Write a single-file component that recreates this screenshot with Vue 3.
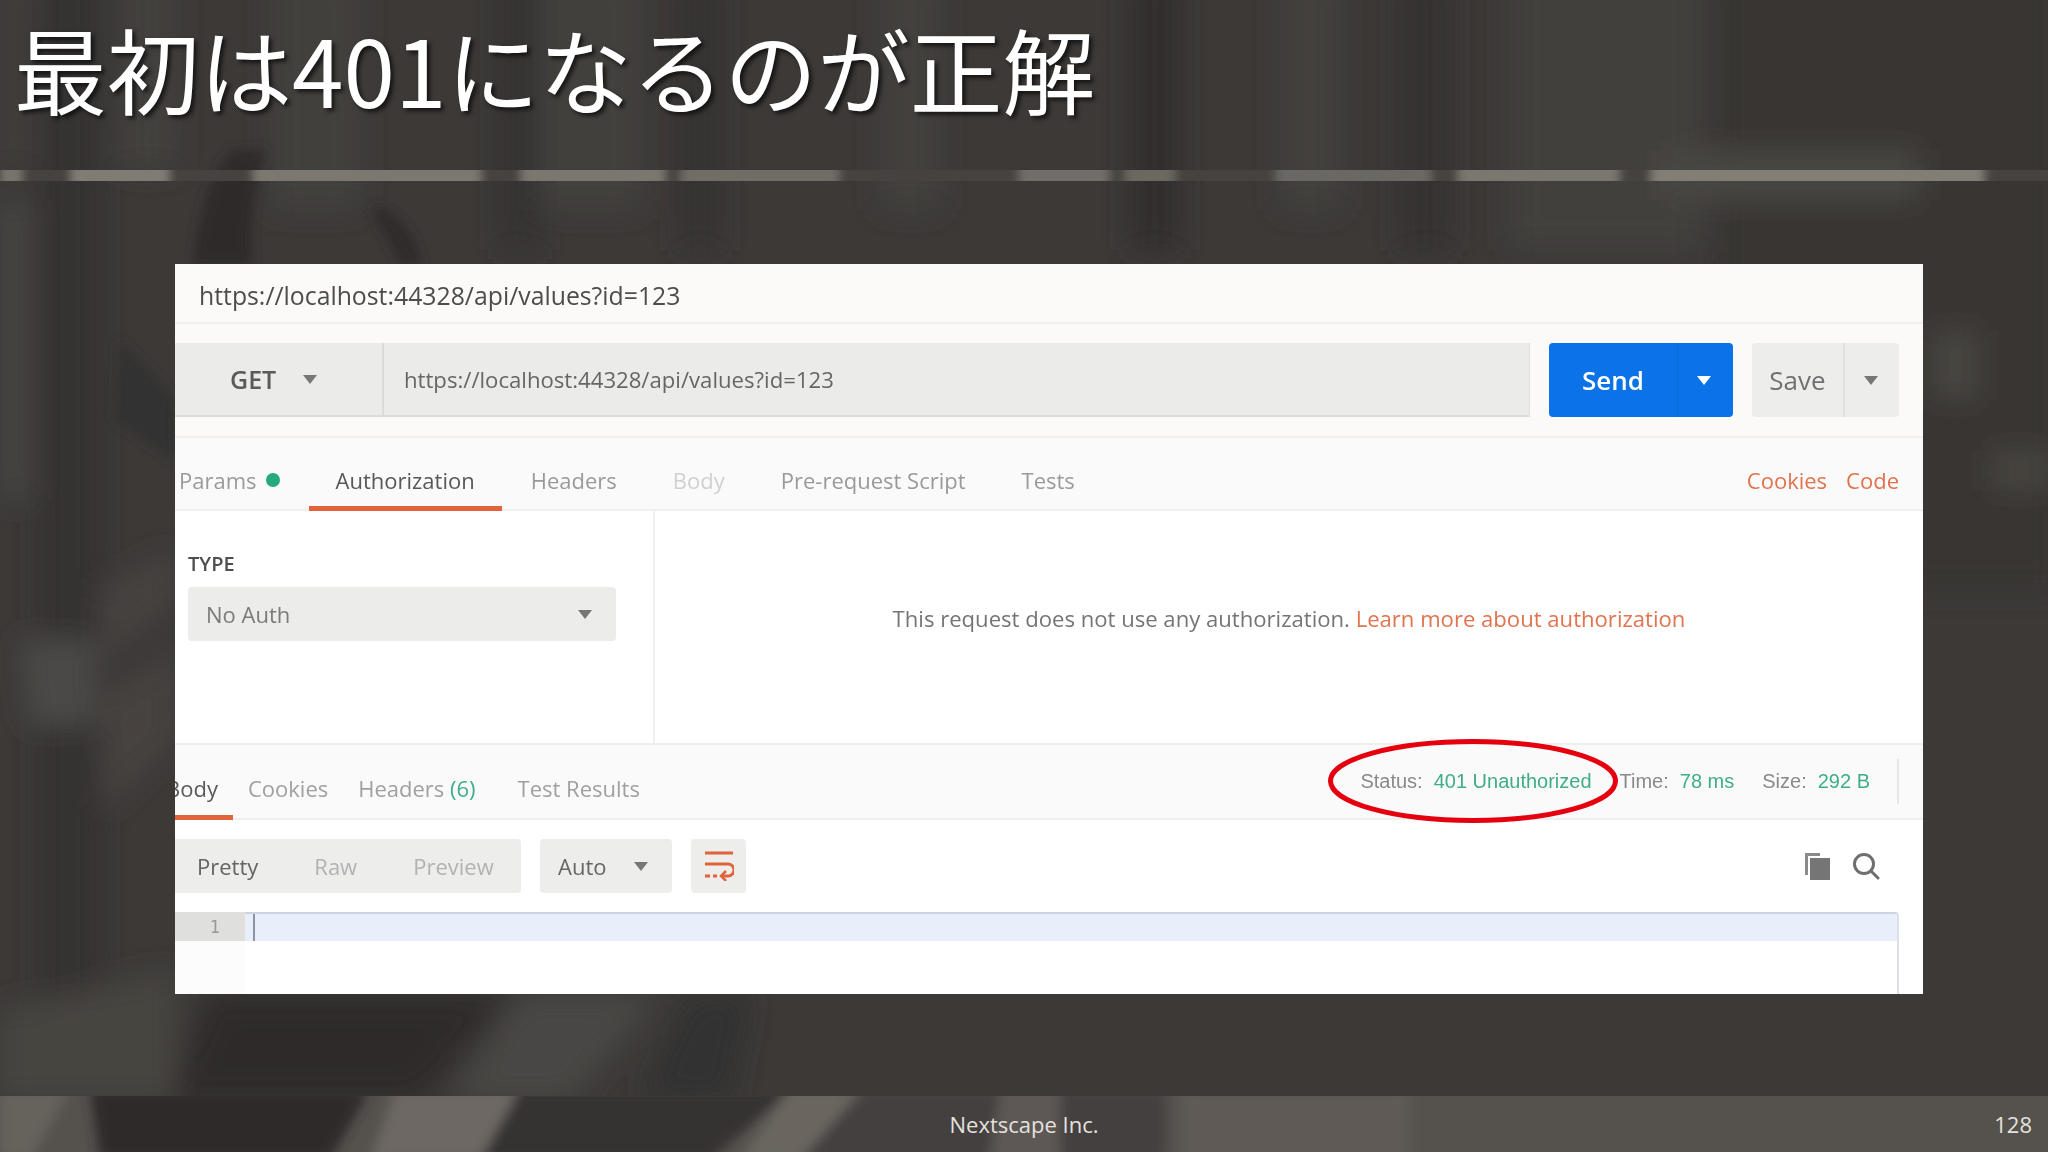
<template>
  <div class="slide">
    <!-- blurred photo behind the slide -->
    <svg class="backdrop" viewBox="0 0 2048 1152" width="2048" height="1152">
      <defs>
        <filter id="soft"><feGaussianBlur stdDeviation="14" /></filter>
        <filter id="softer"><feGaussianBlur stdDeviation="6" /></filter>
        <filter id="sideways"><feGaussianBlur stdDeviation="5 0" /></filter>
        <clipPath id="stripClip"><rect x="0" y="170" width="2048" height="11" /></clipPath>
        <clipPath id="footClip"><rect x="0" y="1096" width="2048" height="56" /></clipPath>
      </defs>
      <rect width="2048" height="1152" fill="#3c3937" />
      <g filter="url(#soft)">
        <rect v-for="b in bands" :key="b.x" :x="b.x" y="-30" :width="b.w" :height="b.h" :fill="b.c" />
        <path d="M1720 -30h340v620h-340z" fill="#383433" />
        <path d="M1660 150h260v50h-260z" fill="#4a4743" />
        <path d="M20 640h75v85H30z" fill="#4b4846" />
        <path d="M100 590l75-40v50l-75 60zM100 700l75-50v90l-70 70z" fill="#464341" />
        <path d="M0 1010l175-40v130H0z" fill="#474441" />
        <path d="M0 200h28v300H0z" fill="#474442" />
        <path d="M210 995h300l-90 105H170z" fill="#2f2c2b" />
        <path d="M520 995h140l-90 105H450z" fill="#4a4744" />
        <path d="M690 995h60l-20 105h-90z" fill="#333030" />
        <path d="M1930 330h50v70h-50zM1990 450h60v40h-60z" fill="#474441" />
      </g>
      <g filter="url(#softer)">
        <path d="M235 150c-25 20-35 60-42 115h60c-5-40 0-70 14-115z" fill="#2f2c2b" />
        <path d="M372 205c20 5 40 20 50 60h-20c-10-20-25-40-30-60z" fill="#2d2a29" />
        <path d="M120 340l55 60v60l-60-40z" fill="#333030" />
      </g>
      <g clip-path="url(#stripClip)">
        <rect x="0" y="170" width="2048" height="11" fill="#45423f" />
        <g filter="url(#sideways)">
          <rect v-for="s in stripSegments" :key="s[0]" :x="s[0]" y="160" :width="s[1]" height="30" :fill="s[2]" />
        </g>
      </g>
      <g clip-path="url(#footClip)">
        <rect x="0" y="1096" width="2048" height="56" fill="#55514d" />
        <g filter="url(#softer)">
          <path d="M0 1090h70l-40 70H0z" fill="#66625b" />
          <path d="M90 1090h280l-40 70H100z" fill="#2f2c2b" />
          <path d="M395 1090h120l-10 70H370z" fill="#6d6863" />
          <path d="M520 1090h270l-80 70H480z" fill="#363332" />
          <path d="M790 1090h70l-60 70h-60z" fill="#6a665f" />
          <path d="M865 1090h300v70H800z" fill="#45413f" />
          <path d="M1000 1090h60v70h-70z" fill="#5d5954" />
          <path d="M1180 1090h230v70h-230z" fill="#5e5a54" />
        </g>
      </g>
    </svg>

    <header class="head">
      <h1 class="title">最初は401になるのが正解</h1>
    </header>

    <main class="body">
      <section class="card">
        <div class="req-title">{{ url }}</div>

        <div class="req-bar">
          <div class="address">
            <div class="method">GET<i class="caret dark"></i></div>
            <div class="url">{{ url }}</div>
          </div>
          <div class="send">
            <span class="send-label">Send</span>
            <span class="send-more"><i class="caret white"></i></span>
          </div>
          <div class="save">
            <span class="save-label">Save</span>
            <span class="save-more"><i class="caret dark"></i></span>
          </div>
        </div>

        <div class="req-tabs">
          <span v-for="t in reqTabs" :key="t.name" class="tab" :class="[t.cls, { active: t.active }]">
            {{ t.name }}<i v-if="t.dot" class="dot"></i>
          </span>
          <span class="links"><a>Cookies</a><a>Code</a></span>
        </div>

        <div class="auth">
          <div class="auth-left">
            <div class="type-label">TYPE</div>
            <div class="select">No Auth<i class="caret dark"></i></div>
          </div>
          <div class="auth-right">
            This request does not use any authorization.
            <a>Learn more about authorization</a>
          </div>
        </div>

        <div class="res-tabs">
          <span class="res-tab first">Body</span>
          <span class="res-tab">Cookies</span>
          <span class="res-tab">Headers <em>(6)</em></span>
          <span class="res-tab">Test Results</span>
          <div class="stats">
            <span v-for="s in stats" :key="s.label" class="stat">{{ s.label }}<b>{{ s.value }}</b></span>
          </div>
          <svg class="ring" width="296" height="90" viewBox="0 0 296 90">
            <ellipse cx="148" cy="45" rx="142.500" ry="39.500" fill="none" stroke="#e5000f" stroke-width="5" />
          </svg>
        </div>

        <div class="tools">
          <div class="views">
            <span class="on">Pretty</span><span>Raw</span><span>Preview</span>
          </div>
          <div class="lang">Auto<i class="caret dark"></i></div>
          <div class="wrap">
            <svg width="30" height="30" viewBox="0 0 30 30" fill="none" stroke="#e0633a" stroke-width="3">
              <path d="M1 2h28M1 13h23a5.500 5.500 0 0 1 0 12h-6" />
              <path d="M22 20l-5 5 5 5" stroke-width="2.500" />
              <path d="M1 25h5M9 25h4" />
            </svg>
          </div>
          <div class="actions">
            <svg width="27" height="28" viewBox="0 0 27 28">
              <path d="M1 1h15v3H4v19H1z" fill="#8a8a8a" />
              <path d="M6 6h20v22H6z" fill="#757575" />
            </svg>
            <svg width="28" height="28" viewBox="0 0 28 28" fill="none" stroke="#6e6e6e" stroke-width="3">
              <circle cx="12" cy="12" r="9.500" />
              <path d="M19 19l7 7" stroke-linecap="round" />
            </svg>
          </div>
        </div>

        <div class="editor">
          <div class="gutter"><span class="num">1</span></div>
          <div class="code"><div class="line"><i class="cursor"></i></div></div>
        </div>
      </section>
    </main>

    <footer class="foot">
      <span class="company">Nextscape Inc.</span>
      <span class="page">128</span>
    </footer>
  </div>
</template>

<script setup>
const url = 'https://localhost:44328/api/values?id=123'

const reqTabs = [
  { name: 'Params', dot: true, cls: 'params' },
  { name: 'Authorization', active: true },
  { name: 'Headers' },
  { name: 'Body', cls: 'off' },
  { name: 'Pre-request Script' },
  { name: 'Tests' }
]

const stats = [
  { label: 'Status:', value: '401 Unauthorized' },
  { label: 'Time:', value: '78 ms' },
  { label: 'Size:', value: '292 B' }
]

const bands = [
  { x: 0, w: 30, h: 200, c: '#403d3b' },
  { x: 40, w: 60, h: 1060, c: '#353230' },
  { x: 120, w: 55, h: 200, c: '#423f3e' },
  { x: 270, w: 90, h: 240, c: '#43413e' },
  { x: 500, w: 40, h: 280, c: '#353231' },
  { x: 540, w: 100, h: 240, c: '#43413e' },
  { x: 680, w: 40, h: 280, c: '#353231' },
  { x: 880, w: 60, h: 240, c: '#43413e' },
  { x: 1130, w: 50, h: 280, c: '#322f2e' },
  { x: 1280, w: 60, h: 240, c: '#43403e' },
  { x: 1400, w: 50, h: 280, c: '#363332' },
  { x: 1510, w: 190, h: 280, c: '#43403e' }
]

const stripSegments = [
  [0, 23, '#77746e'],
  [70, 100, '#807c75'],
  [252, 230, '#7b7770'],
  [520, 146, '#7a766f'],
  [680, 160, '#706c66'],
  [1018, 92, '#716d67'],
  [1124, 52, '#6a6761'],
  [1275, 157, '#6b6863'],
  [1457, 163, '#7a766f'],
  [1650, 335, '#827d74']
]
</script>

<style scoped>
.slide {
  position: relative;
  width: 2048px;
  height: 1152px;
  overflow: hidden;
  display: flex;
  flex-direction: column;
  font-family: "Open Sans", "Noto Sans CJK JP", sans-serif;
  color: #fff;
}

.backdrop {
  position: absolute;
  left: 0;
  top: 0;
}

.head,
.body,
.foot {
  position: relative;
}

.head {
  height: 181px;
  padding: 8px 0 0 14px;
  box-sizing: border-box;
}

.title {
  margin: 0;
  font-family: "Noto Sans CJK JP", sans-serif;
  font-size: 92.700px;
  font-weight: 400;
  line-height: 120px;
  white-space: nowrap;
  text-shadow: 3px 3px 4px rgba(0, 0, 0, 0.65);
}

.body {
  flex: 1;
  padding: 83px 125px 0 175px;
}

.card {
  position: relative;
  height: 730px;
  background: #fff;
  color: #6f6f6f;
  overflow: hidden;
  font-size: 22px;
  filter: blur(0.4px);
}

.req-title {
  height: 58px;
  line-height: 62px;
  padding-left: 24px;
  font-size: 24.800px;
  font-weight: 500;
  color: #4d4d4d;
  background: #fbfaf9;
  border-bottom: 2px solid #f0efed;
}

.req-bar {
  height: 114px;
  box-sizing: border-box;
  display: flex;
  align-items: center;
  gap: 19px;
  padding-right: 24px;
  background: #fbfaf9;
  border-bottom: 2px solid #f0efed;
}

.address {
  flex: 1;
  height: 74px;
  display: flex;
  background: #ebebea;
  border-bottom: 2px solid #dcdcda;
  box-sizing: border-box;
  border-right: 1px solid #dfdfdd;
}

.method {
  width: 209px;
  display: flex;
  align-items: center;
  padding-left: 55px;
  box-sizing: border-box;
  font-size: 25px;
  font-weight: 600;
  color: #5a5a5a;
  border-right: 2px solid #dbdbd9;
}

.method .caret {
  margin-left: 27px;
}

.url {
  display: flex;
  align-items: center;
  padding-left: 20px;
  font-size: 22.150px;
  color: #666;
}

.caret {
  display: inline-block;
  width: 0;
  height: 0;
  border-left: 7px solid transparent;
  border-right: 7px solid transparent;
  border-top: 9px solid #777;
}

.caret.white {
  border-top-color: #fff;
}

.send {
  width: 184px;
  height: 74px;
  display: flex;
  background: #0b72e7;
  border-radius: 4px;
  color: #fff;
  font-size: 26px;
  font-weight: 600;
}

.send-label {
  width: 128px;
  display: flex;
  align-items: center;
  justify-content: center;
}

.send-more {
  flex: 1;
  display: flex;
  align-items: center;
  justify-content: center;
  padding-right: 4px;
  border-left: 1px solid #0a6cdc;
}

.save {
  width: 147px;
  height: 74px;
  display: flex;
  background: #ededec;
  border-radius: 4px;
  color: #717171;
  font-size: 26px;
  font-weight: 500;
}

.save-label {
  width: 91px;
  display: flex;
  align-items: center;
  justify-content: center;
}

.save-more {
  flex: 1;
  display: flex;
  align-items: center;
  justify-content: center;
  padding-right: 3px;
  border-left: 2px solid #e0e0df;
}

.req-tabs {
  height: 73px;
  box-sizing: border-box;
  display: flex;
  align-items: stretch;
  padding-right: 24px;
  background: #fbfafa;
  border-bottom: 2px solid #f0efed;
}

.tab {
  display: flex;
  align-items: center;
  padding: 16px 27px 0;
  margin-right: 2px;
  color: #9a9a9a;
  margin-bottom: -2px;
  border-bottom: 5px solid transparent;
  box-sizing: border-box;
}

.tab.params {
  padding: 16px 27px 0 4px;
}

.tab.active {
  color: #585858;
  border-bottom-color: #e2643c;
}

.tab.off {
  color: #d0d0d0;
}

.dot {
  width: 14px;
  height: 14px;
  margin-left: 9px;
  border-radius: 50%;
  background: #26a97c;
}

.links {
  margin-left: auto;
  padding-top: 13px;
  display: flex;
  align-items: center;
  gap: 19px;
  color: #e2734e;
}

.auth {
  height: 232px;
  display: flex;
  background: #fff;
  border-bottom: 2px solid #f0efed;
}

.auth-left {
  width: 480px;
  box-sizing: border-box;
  padding: 41px 0 0 13px;
  border-right: 2px solid #f1f0ef;
}

.type-label {
  font-size: 20px;
  font-weight: 600;
  line-height: 24px;
  margin-bottom: 11px;
  color: #4f4f4f;
}

.select {
  width: 428px;
  height: 54px;
  padding: 0 24px 0 18px;
  box-sizing: border-box;
  display: flex;
  align-items: center;
  justify-content: space-between;
  background: #ececeb;
  border-radius: 4px;
  color: #7b7b7b;
}

.auth-right {
  flex: 1;
  padding: 91px 0 0 0;
  text-align: center;
  color: #757575;
  font-size: 22.100px;
  line-height: 32px;
}

.auth-right a {
  color: #e2734e;
}

.res-tabs {
  position: relative;
  height: 75px;
  box-sizing: border-box;
  display: flex;
  align-items: stretch;
  padding-right: 24px;
  background: #fbfafa;
  border-bottom: 2px solid #f0efed;
}

.res-tab {
  display: flex;
  align-items: center;
  padding: 12px 15px 0;
  color: #a0a0a0;
  white-space: pre;
}

.res-tab em {
  font-style: normal;
  color: #3fae87;
}

.res-tab.first {
  margin-left: -15px;
  padding: 15px 15px 0 6px;
  color: #5a5a5a;
  margin-bottom: -2px;
  border-bottom: 5px solid #e2643c;
  box-sizing: border-box;
}

.res-tab:nth-child(4) {
  margin-left: 12px;
}

.stats {
  margin-left: auto;
  display: flex;
  align-items: center;
  padding-right: 29px;
  font-family: "Liberation Sans", Arial, sans-serif;
  font-size: 20px;
  color: #8a8a8a;
  position: relative;
}

.stats::after {
  content: "";
  position: absolute;
  right: 0;
  top: 14px;
  bottom: 14px;
  width: 2px;
  background: #e6e6e6;
}

.stat {
  margin-left: 28px;
}

.stat b {
  font-weight: 400;
  margin-left: 11px;
  color: #3fae87;
}

.ring {
  position: absolute;
  left: 1150px;
  top: -9px;
}

.tools {
  height: 92px;
  box-sizing: border-box;
  display: flex;
  align-items: center;
  gap: 19px;
  padding-right: 43px;
  background: #fff;
}

.views {
  width: 346px;
  height: 54px;
  display: flex;
  align-items: center;
  background: #ededec;
  border-radius: 0 4px 4px 0;
  color: #b2b2b2;
  box-sizing: border-box;
  padding-left: 22px;
  gap: 56px;
}

.views .on {
  color: #646464;
}

.lang {
  width: 132px;
  height: 54px;
  box-sizing: border-box;
  display: flex;
  align-items: center;
  justify-content: space-between;
  padding: 0 24px 0 18px;
  background: #ededec;
  border-radius: 4px;
  color: #666;
}

.wrap {
  width: 55px;
  height: 54px;
  display: flex;
  align-items: center;
  justify-content: center;
  background: #ededec;
  border-radius: 4px;
}

.actions {
  margin-left: auto;
  display: flex;
  align-items: center;
  gap: 21px;
}

.editor {
  display: flex;
  height: 83px;
  padding-right: 24px;
}

.gutter {
  width: 70px;
  background: #fcfcfc;
}

.num {
  display: block;
  height: 29px;
  line-height: 31px;
  padding-right: 25px;
  text-align: right;
  font-family: "DejaVu Sans Mono", monospace;
  font-size: 17px;
  color: #999;
  background: #dfdfdd;
}

.code {
  flex: 1;
  border-right: 2px solid #dcdfe6;
  border-top: 2px solid #ccd3e2;
  border-top-right-radius: 4px;
}

.line {
  height: 27px;
  background: #e8eefa;
  padding-left: 8px;
}

.cursor {
  display: block;
  width: 2px;
  height: 27px;
  background: #8b93a5;
}

.foot {
  height: 56px;
  margin-top: auto;
  display: grid;
  grid-template-columns: 1fr auto 1fr;
  align-items: center;
  padding-right: 16px;
  font-size: 22px;
  color: #e4e2de;
}

.company {
  grid-column: 2;
  margin-left: 16px;
}

.page {
  grid-column: 3;
  justify-self: end;
}
</style>
